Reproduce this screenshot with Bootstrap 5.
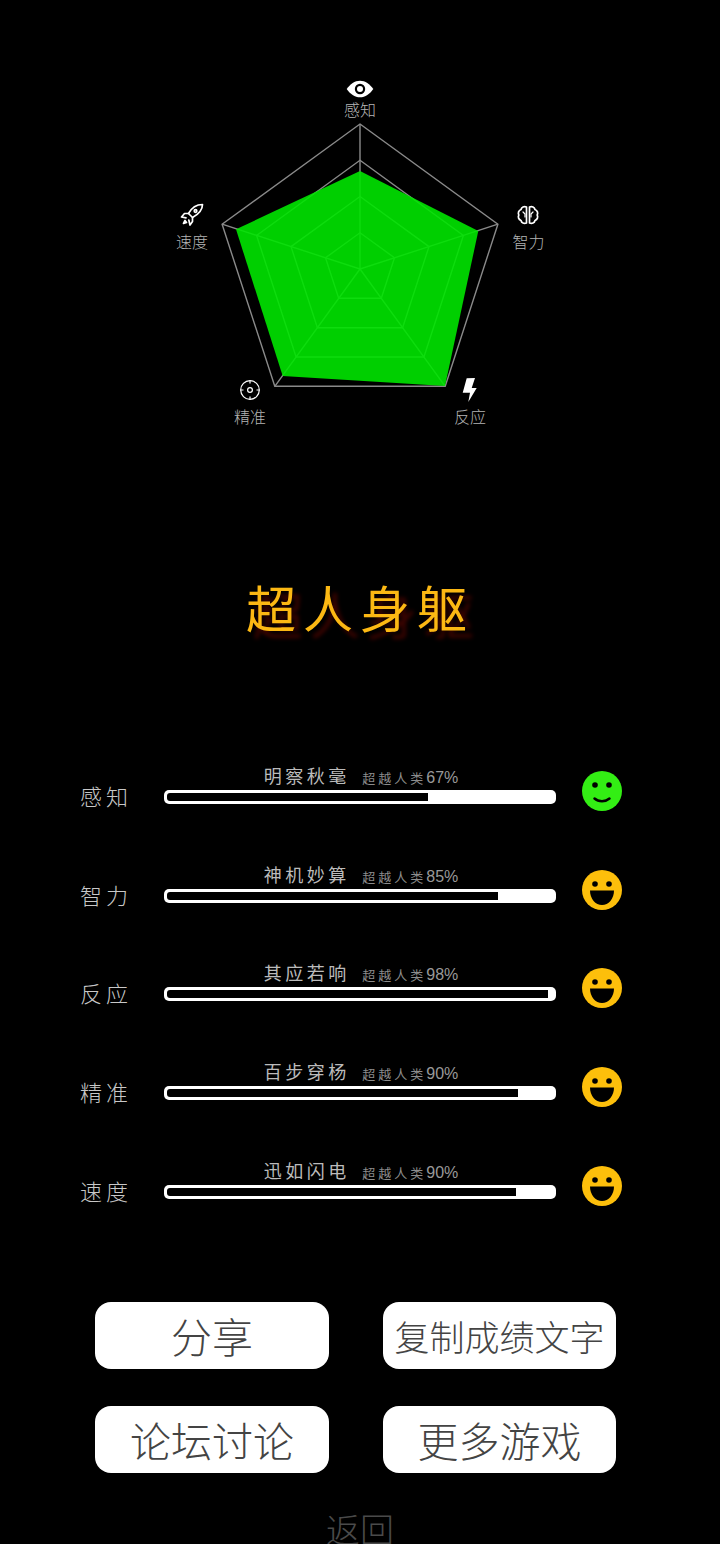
<!DOCTYPE html>
<html lang="en">
<head>
  <meta charset="UTF-8">
  <meta name="viewport" content="width=device-width, initial-scale=1.0">
  <title>超人身躯</title>
  <link href="https://cdn.jsdelivr.net/npm/bootstrap@5.3.3/dist/css/bootstrap.min.css" rel="stylesheet">
  <script src="https://cdn.jsdelivr.net/npm/bootstrap@5.3.3/dist/js/bootstrap.bundle.min.js"></script>
  <style>
    html, body { height: 1544px; overflow: hidden; background: #000; }
    body { font-family: "Noto Sans CJK SC", "Liberation Sans", sans-serif; }
    .radar { display: block; width: 720px; height: 440px; }
    .radar text { font-size: 16px; font-weight: 300; fill: #b4b4b4; text-anchor: middle; }
    .rad-line { fill: none; stroke: #8a8a8a; stroke-width: 1.4; }
    .rad-area { fill: #00e600; fill-opacity: .9; }
    .ico-line { fill: none; stroke: #fff; stroke-width: 1.7; stroke-linejoin: round; stroke-linecap: round; }
    .game-title { margin: 136px 0 69px; height: 60px; line-height: 60px; font-size: 50px; letter-spacing: 7px; color: #fcb813; text-shadow: 7px 7px 4px #3f0400; }
    .stat-row { height: 98.75px; padding-left: 80px; }
    .stat-name { width: 84px; font-size: 22px; line-height: 30px; letter-spacing: 4px; color: #c8c8c8; font-weight: 300; margin-bottom: -6px; }
    .stat-col { width: 392px; }
    .stat-cap { line-height: 20px; margin-bottom: 2px; padding-left: 2px; color: #bbb; font-size: 18px; letter-spacing: 3.5px; white-space: nowrap; }
    .stat-cap small { font-size: 13px; letter-spacing: 3px; color: #8c8c8c; margin-left: 12.5px; }
    .stat-cap b { font: 16px "Liberation Sans", sans-serif; letter-spacing: 0; color: #999; }
    .stat-bar { height: 14px; padding: 3px 0 3px 3px; background: #fff; border-radius: 5px; }
    .stat-bar .progress-bar { background: #000; border-radius: 3px 0 0 3px; }
    .stat-face { width: 40px; height: 40px; margin: 0 0 -7px 26px; flex: none; }
    .btn-area { margin: 103px 0 0 95px; display: grid; grid-template-columns: 234px 233px; gap: 37px 54px; }
    .btn-game { height: 67px; padding: 0; background: #fff; border: 0; border-radius: 16px; color: #444; font-size: 41px; font-weight: 300; line-height: 67px; white-space: nowrap; }
    .btn-game:hover { background: #fff; color: #444; }
    .btn-narrow { font-size: 35px; }
    .back-link { margin-top: 34px; line-height: 44px; font-size: 34px; font-weight: 300; color: #4a4a4a; }
  </style>
</head>
<body>
  <!-- radar chart -->
  <svg class="radar" viewBox="0 0 720 440">
    <polygon class="rad-line" points="360,124 497.9,224.2 445.2,386.3 274.8,386.3 222.1,224.2"/>
    <polygon class="rad-line" points="360,160.3 463.4,235.4 423.9,357 296.1,357 256.6,235.4"/>
    <polygon class="rad-line" points="360,196.5 429,246.6 402.6,327.7 317.4,327.7 291,246.6"/>
    <polygon class="rad-line" points="360,232.8 394.5,257.8 381.3,298.3 338.7,298.3 325.5,257.8"/>
    <path class="rad-line" d="M360 269V124M360 269L497.9 224.2M360 269L445.2 386.3M360 269L274.8 386.3M360 269L222.1 224.2"/>
    <polygon class="rad-area" points="360,171 478.3,231 445,386 282.7,376 236,229.3"/>

    <!-- eye -->
    <path fill="#fff" d="M346.7 89c3.5-5 8-8.300 13.300-8.300S369.800 84 373.300 89c-3.500 5-8 8.300-13.300 8.300S350.200 94 346.700 89z"/>
    <circle cx="360" cy="89" r="5.200" fill="#000"/>
    <circle cx="360" cy="89" r="3" fill="#fff"/>
    <!-- rocket -->
    <g class="ico-line" transform="translate(180 203)">
      <path d="M22.500 1.500c-6 0-11 3.500-14 9l4 4c5.500-3 10-7.500 10-13z"/>
      <path d="M8.500 10.500H4.500L1.500 14l4.500.8"/>
      <path d="M12.500 14.500v4l-2.500 3.500-1.200-5"/>
      <circle cx="15.500" cy="8" r="1.300"/>
      <path d="M5 17.500l-1.500 3 3-1z"/>
    </g>
    <!-- brain -->
    <g class="ico-line" transform="translate(517 205)">
      <path d="M9.500 2C7 1 4.500 2 4 4.500 1.500 5.500 .8 8 1.800 10 .8 12 1.500 14.500 4 15.500 4.500 18 7 19 9.500 18z"/>
      <path d="M12.500 2c2.500-1 5 0 5.500 2.500 2.500 1 3.200 3.500 2.200 5.500 1 2 .3 4.500-2.200 5.500-.5 2.500-3 3.500-5.500 2.500z"/>
      <path d="M6 7l2 2v3M16 7l-2 2v3" stroke-width="1.200"/>
    </g>
    <!-- target -->
    <g fill="none" stroke="#fff" stroke-width="1.200">
      <circle cx="250" cy="390" r="9.300"/>
      <circle cx="250" cy="390" r="2.400"/>
      <path d="M250 380.500v3M250 396.500v3M240.500 390h3M256.500 390h3"/>
    </g>
    <!-- bolt -->
    <polygon fill="#fff" points="466.700,378.300 475,378 471.700,388 476.700,388 468.300,402 470,392.700 462.700,392.700"/>

    <text x="360" y="116">感知</text>
    <text x="528.500" y="248">智力</text>
    <text x="192" y="248">速度</text>
    <text x="250" y="423">精准</text>
    <text x="470" y="423">反应</text>
  </svg>

  <h1 class="game-title text-center fw-normal">超人身躯</h1>

  <!-- stat rows -->
  <div class="stat-row d-flex align-items-end">
    <div class="stat-name">感知</div>
    <div class="stat-col">
      <div class="stat-cap text-center">明察秋毫<small>超越人类<b>67%</b></small></div>
      <div class="progress stat-bar"><div class="progress-bar" style="width: 67%"></div></div>
    </div>
    <svg class="stat-face" viewBox="0 0 40 40"><circle cx="20" cy="20" r="20" fill="#33ee14"/><circle cx="13" cy="14" r="2.800" fill="#000"/><circle cx="27" cy="14" r="2.800" fill="#000"/><path d="M12.500 27.500c4 3.500 11 3.500 15 0" fill="none" stroke="#000" stroke-width="2.500" stroke-linecap="round"/></svg>
  </div>
  <div class="stat-row d-flex align-items-end">
    <div class="stat-name">智力</div>
    <div class="stat-col">
      <div class="stat-cap text-center">神机妙算<small>超越人类<b>85%</b></small></div>
      <div class="progress stat-bar"><div class="progress-bar" style="width: 85%"></div></div>
    </div>
    <svg class="stat-face" viewBox="0 0 40 40"><circle cx="20" cy="20" r="20" fill="#fdbf0b"/><circle cx="13" cy="14" r="2.800" fill="#000"/><circle cx="27" cy="14" r="2.800" fill="#000"/><path d="M8 20.500h24c0 8.500-5.500 14.500-12 14.500S8 29 8 20.500z" fill="#000"/></svg>
  </div>
  <div class="stat-row d-flex align-items-end">
    <div class="stat-name">反应</div>
    <div class="stat-col">
      <div class="stat-cap text-center">其应若响<small>超越人类<b>98%</b></small></div>
      <div class="progress stat-bar"><div class="progress-bar" style="width: 98%"></div></div>
    </div>
    <svg class="stat-face" viewBox="0 0 40 40"><circle cx="20" cy="20" r="20" fill="#fdbf0b"/><circle cx="13" cy="14" r="2.800" fill="#000"/><circle cx="27" cy="14" r="2.800" fill="#000"/><path d="M8 20.500h24c0 8.500-5.500 14.500-12 14.500S8 29 8 20.500z" fill="#000"/></svg>
  </div>
  <div class="stat-row d-flex align-items-end">
    <div class="stat-name">精准</div>
    <div class="stat-col">
      <div class="stat-cap text-center">百步穿杨<small>超越人类<b>90%</b></small></div>
      <div class="progress stat-bar"><div class="progress-bar" style="width: 90.3%"></div></div>
    </div>
    <svg class="stat-face" viewBox="0 0 40 40"><circle cx="20" cy="20" r="20" fill="#fdbf0b"/><circle cx="13" cy="14" r="2.800" fill="#000"/><circle cx="27" cy="14" r="2.800" fill="#000"/><path d="M8 20.500h24c0 8.500-5.500 14.500-12 14.500S8 29 8 20.500z" fill="#000"/></svg>
  </div>
  <div class="stat-row d-flex align-items-end">
    <div class="stat-name">速度</div>
    <div class="stat-col">
      <div class="stat-cap text-center">迅如闪电<small>超越人类<b>90%</b></small></div>
      <div class="progress stat-bar"><div class="progress-bar" style="width: 89.8%"></div></div>
    </div>
    <svg class="stat-face" viewBox="0 0 40 40"><circle cx="20" cy="20" r="20" fill="#fdbf0b"/><circle cx="13" cy="14" r="2.800" fill="#000"/><circle cx="27" cy="14" r="2.800" fill="#000"/><path d="M8 20.500h24c0 8.500-5.500 14.500-12 14.500S8 29 8 20.500z" fill="#000"/></svg>
  </div>

  <!-- buttons -->
  <div class="btn-area">
    <button type="button" class="btn btn-game">分享</button>
    <button type="button" class="btn btn-game btn-narrow">复制成绩文字</button>
    <button type="button" class="btn btn-game">论坛讨论</button>
    <button type="button" class="btn btn-game">更多游戏</button>
  </div>
  <div class="back-link text-center">返回</div>
</body>
</html>
